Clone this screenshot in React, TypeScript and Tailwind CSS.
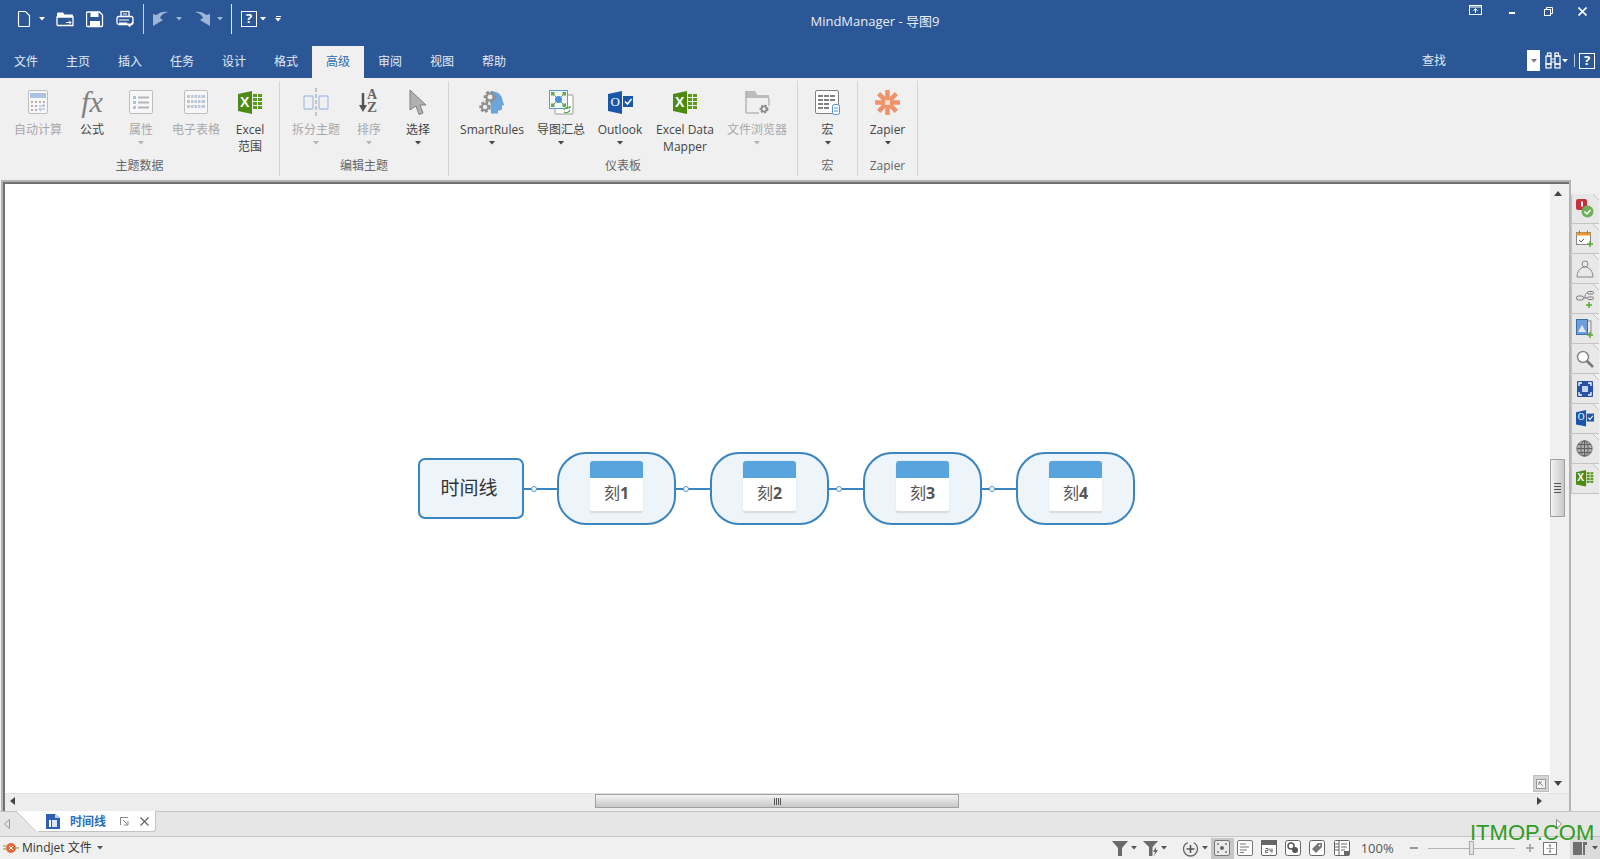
import React from "react";

const Tri = ({ c = "#fff", className = "" }: { c?: string; className?: string }) => (
  <svg width="6" height="4" viewBox="0 0 6 4" className={className}><polygon points="0,0 6,0 3,3.5" fill={c} /></svg>
);

/* ---------- title bar icons ---------- */
const QNew = () => (
  <svg width="14" height="18" viewBox="0 0 14 18"><path d="M2.5 1.5h6l4 4v10a1 1 0 0 1-1 1h-9a1 1 0 0 1-1-1v-13a1 1 0 0 1 1-1z" fill="none" stroke="#fff" strokeWidth="1.2" /></svg>
);
const QOpen = () => (
  <svg width="18" height="18" viewBox="0 0 18 18"><path d="M1 3.5a1 1 0 0 1 1-1h5l1.5 2H16a1 1 0 0 1 1 1V7H1z" fill="#fff" /><path d="M1 7h16v8.500H2a1 1 0 0 1-1-1z" fill="none" stroke="#fff" strokeWidth="1.300" /><path d="M10 12.500h5M13 10.500l2 2-2 2" stroke="#fff" fill="none" /></svg>
);
const QSave = () => (
  <svg width="18" height="18" viewBox="0 0 18 18"><path d="M1.500 2h12l3 3v10.500a1 1 0 0 1-1 1h-14a1 1 0 0 1-1-1V3a1 1 0 0 1 1-1z" fill="none" stroke="#fff" strokeWidth="1.300" /><rect x="4.500" y="2" width="8" height="5" fill="#fff" /><rect x="4" y="11" width="10" height="6" fill="#fff" /></svg>
);
const QPrint = () => (
  <svg width="18" height="18" viewBox="0 0 18 18"><rect x="5" y="1.500" width="8" height="5" fill="none" stroke="#fff" strokeWidth="1.300" /><path d="M7 4h4" stroke="#fff" /><rect x="1" y="6.500" width="16" height="8" rx="2" fill="#2b5797" stroke="#fff" strokeWidth="1.300" /><path d="M3 9.500h10v1H3zM3 12.500h8v2.500H3z" fill="#fff" /><path d="M11.500 13.500l2 2.500 3.500-4" stroke="#fff" strokeWidth="1.500" fill="none" /></svg>
);
const QUndo = () => (
  <svg width="17" height="17" viewBox="0 0 17 17"><path d="M1 4L4.500 5C8 2 12 1 16 2 12 3 9 5 8 8L11 10 1 16z" fill="#9db5d6" /></svg>
);
const QRedo = () => (
  <svg width="17" height="17" viewBox="0 0 17 17"><path d="M16 4L12.500 5C9 2 5 1 1 2 5 3 8 5 9 8L6 10 16 16z" fill="#9db5d6" /></svg>
);
const HelpBox = ({ s = 16 }: { s?: number }) => (
  <span className="flex items-center justify-center border-[1.5px] border-white text-white font-bold text-[13px] leading-none" style={{ width: s, height: s }}>?</span>
);
const Binoc = () => (
  <svg width="16" height="17" viewBox="0 0 16 17"><g fill="none" stroke="#fff" strokeWidth="1.200"><rect x="2.500" y="1" width="3.500" height="3" /><rect x="10" y="1" width="3.500" height="3" /><rect x="1" y="4" width="5" height="8" /><rect x="10" y="4" width="5" height="8" /><rect x="1" y="12" width="5" height="4" /><rect x="10" y="12" width="5" height="4" /><path d="M6 7h4M6 10h4" /></g></svg>
);

/* ---------- ribbon icons ---------- */
const Calc = () => (
  <svg width="22" height="26" viewBox="0 0 22 26"><rect x="1.500" y="1.500" width="19" height="23" rx="1.500" fill="#f7f7f7" stroke="#bdbdbd" /><rect x="3" y="4" width="16" height="5" fill="#a9c3e3" /><g fill="#b0b0b0"><rect x="4" y="12" width="2" height="2" /><rect x="8" y="12" width="2" height="2" /><rect x="12" y="12" width="2" height="2" /><rect x="16" y="12" width="2" height="2" /><rect x="4" y="16" width="2" height="2" /><rect x="8" y="16" width="2" height="2" /><rect x="4" y="20" width="2" height="2" /><rect x="8" y="20" width="2" height="2" /></g><path d="M12 17h6l-2-2M18 20h-6l2 2" stroke="#8fb1d6" fill="none" /></svg>
);
const Props = () => (
  <svg width="24" height="24" viewBox="0 0 24 24"><rect x="0.500" y="0.500" width="23" height="23" rx="1.500" fill="#f7f7f7" stroke="#bdbdbd" /><g fill="#a9c3e3"><rect x="4" y="6" width="3" height="3" /><rect x="4" y="11" width="3" height="3" /><rect x="4" y="16" width="3" height="3" /></g><g fill="#b5b5b5"><rect x="9" y="6.500" width="11" height="2" /><rect x="9" y="11.500" width="11" height="2" /><rect x="9" y="16.500" width="11" height="2" /></g></svg>
);
const Grid = () => (
  <svg width="24" height="24" viewBox="0 0 24 24"><rect x="0.500" y="0.500" width="23" height="23" rx="1.500" fill="#f7f7f7" stroke="#bdbdbd" /><g fill="#bcc8d6"><rect x="3" y="5" width="18" height="3" /><rect x="3" y="10" width="18" height="3" /><rect x="3" y="15" width="18" height="3" /></g><g stroke="#f7f7f7"><path d="M6.500 4v15M10 4v15M13.500 4v15M17 4v15" /></g></svg>
);
const ExcelIc = ({ s = 1 }: { s?: number }) => (
  <span className="relative block" style={{ width: 25 * s, height: 23 * s }}>
    <svg width={25 * s} height={23 * s} viewBox="0 0 25 23" className="absolute inset-0"><polygon points="0,3 14,0 14,23 0,20" fill="#4d8a13" /><g fill="#5c9a1e"><rect x="15" y="3" width="4" height="3" /><rect x="20" y="3" width="4" height="3" /><rect x="15" y="7" width="4" height="3" /><rect x="20" y="7" width="4" height="3" /><rect x="15" y="11" width="4" height="3" /><rect x="20" y="11" width="4" height="3" /><rect x="15" y="15" width="4" height="3" /><rect x="20" y="15" width="4" height="3" /></g></svg>
    <span className="absolute font-bold text-white leading-none" style={{ left: 2.500 * s, top: 4 * s, fontSize: 14 * s, fontFamily: "Liberation Sans" }}>X</span>
  </span>
);
const Split = () => (
  <svg width="26" height="28" viewBox="0 0 26 28"><rect x="1" y="8" width="9" height="13" rx="1" fill="none" stroke="#a9c3e3" strokeWidth="1.300" /><rect x="16" y="8" width="9" height="13" rx="1" fill="none" stroke="#a9c3e3" strokeWidth="1.300" /><path d="M13 0v28" stroke="#c4c4c4" strokeWidth="2" strokeDasharray="4 2" /></svg>
);
const Sort = () => (
  <span className="relative block w-[20px] h-[24px]">
    <svg width="8" height="20" viewBox="0 0 8 20" className="absolute left-0 top-[3px]"><path d="M4 0v13" stroke="#555" strokeWidth="2.500" /><polygon points="0,12 8,12 4,19" fill="#555" /></svg>
    <span className="absolute left-[8px] top-[-2px] text-[14px] leading-[14px] font-bold text-[#666] font-['Liberation_Serif']">A</span>
    <span className="absolute left-[8px] top-[10px] text-[15px] leading-[15px] font-bold text-[#666] font-['Liberation_Serif']">Z</span>
  </span>
);
const Cursor = () => (
  <svg width="18" height="26" viewBox="0 0 18 26"><polygon points="1,1 17,16 11,16 14,24 10,25.500 7,17 1,21" fill="#b0b0b0" stroke="#808080" /></svg>
);
const Gear = ({ x, y, r, c }: { x: number; y: number; r: number; c: string }) => (
  <g>
    <circle cx={x} cy={y} r={r} fill="none" stroke={c} strokeWidth={r * 0.55} strokeDasharray={`${r * 0.55} ${r * 0.4}`} />
    <circle cx={x} cy={y} r={r * 0.72} fill="#f0f0f0" stroke={c} strokeWidth={r * 0.45} />
  </g>
);
const Smart = () => (
  <svg width="26" height="26" viewBox="0 0 26 26"><path d="M11 3c7-2 12 3 12.500 8 0 2 2 4 1.500 5l-2 .5v3c0 2-2 2-4 2v3h-7z" fill="#6aa6dc" /><Gear x={11} y={8} r={5} c="#8f8f8f" /><Gear x={6} y={18} r={4.500} c="#8f8f8f" /></svg>
);
const Rollup = () => (
  <svg width="25" height="25" viewBox="0 0 25 25"><rect x="6" y="5" width="18" height="19" rx="1" fill="#fff" stroke="#9a9a9a" /><rect x="0.500" y="0.500" width="18" height="18" fill="#f3f8fd" stroke="#5b9bd5" /><path d="M4 4l11 11M15 4L4 15" stroke="#6aa84f" /><circle cx="9.500" cy="9.500" r="3.500" fill="#4a90d9" /><g fill="#6aa84f"><rect x="2" y="2" width="3.500" height="3.500" /><rect x="13.500" y="2" width="3.500" height="3.500" /><rect x="2" y="13.500" width="3.500" height="3.500" /><rect x="13.500" y="13.500" width="3.500" height="3.500" /></g><path d="M15 20a4 4 0 0 1 6-2M21 18v-2M21 20a4 4 0 0 1-6 2" stroke="#58a832" strokeWidth="1.200" fill="none" /></svg>
);
const OutlookIc = ({ s = 1 }: { s?: number }) => (
  <span className="relative block" style={{ width: 25 * s, height: 23 * s }}>
    <svg width={25 * s} height={23 * s} viewBox="0 0 25 23" className="absolute inset-0"><polygon points="0,3 14,0 14,23 0,20" fill="#1b57a8" /><rect x="15" y="5" width="10" height="11" fill="#1b57a8" /><path d="M17 10.500l2.500 2.500 4-5" stroke="#fff" strokeWidth="1.600" fill="none" /></svg>
    <span className="absolute text-white leading-none font-['Liberation_Serif']" style={{ left: 3 * s, top: 4.500 * s, fontSize: 13 * s }}>O</span>
  </span>
);
const FolderGear = () => (
  <svg width="25" height="25" viewBox="0 0 25 25"><path d="M1 1h9l2.500 4H24v3H1z" fill="#bcbcbc" /><path d="M1 8v15h13M24 8v8" stroke="#9a9a9a" fill="none" /><path d="M1 1v7" stroke="#9a9a9a" /><Gear x={19} y={19} r={3.500} c="#8a8a8a" /></svg>
);
const Macro = () => (
  <svg width="25" height="25" viewBox="0 0 25 25"><rect x="0.500" y="0.500" width="23" height="23" rx="1.500" fill="#fdfdfd" stroke="#808080" /><g fill="#808080"><rect x="3" y="5" width="5" height="2" /><rect x="9" y="5" width="5" height="2" /><rect x="15" y="5" width="5" height="2" /><rect x="3" y="9" width="5" height="2" /><rect x="9" y="9" width="5" height="2" /><rect x="15" y="9" width="5" height="2" /><rect x="3" y="13" width="5" height="2" /><rect x="9" y="13" width="5" height="2" /><rect x="3" y="17" width="5" height="2" /><rect x="9" y="17" width="5" height="2" /></g><rect x="17.500" y="14.500" width="7" height="10" rx="2" fill="#fff" stroke="#4a90d9" /><path d="M19 18h4M19 21h4" stroke="#4a90d9" /></svg>
);
const ZapierIc = () => (
  <svg width="25" height="25" viewBox="0 0 25 25"><g stroke="#f0926a" strokeWidth="4.500"><path d="M12.500 0v25M0 12.500h25M3.600 3.600l17.800 17.800M21.400 3.600L3.600 21.400" /></g><rect x="10" y="10" width="5" height="5" fill="#f7dccf" /></svg>
);

const RibbonBtn = ({ w, icon, l1, l2, arrow, off }: { w: string; icon: React.ReactNode; l1: string; l2?: string; arrow?: boolean; off?: boolean }) => (
  <div className={`flex flex-col items-center pt-[7px] ${w}`}>
    <div className="h-[28px] flex items-center justify-center">{icon}</div>
    <div className={`mt-[5px] text-[12px] leading-[17px] whitespace-nowrap ${off ? "text-[#a8a8a8]" : "text-[#444444]"}`}>{l1}</div>
    {l2 && <div className={`text-[12px] leading-[17px] whitespace-nowrap ${off ? "text-[#a8a8a8]" : "text-[#444444]"}`}>{l2}</div>}
    {arrow && <Tri c={off ? "#b5b5b5" : "#444444"} className="mt-[3px]" />}
  </div>
);

const Group = ({ w, label, pl, children }: { w: string; label: string; pl: string; children: React.ReactNode }) => (
  <div className={`flex flex-col h-[95px] border-r border-[#d4d4d4] shrink-0 ${w}`}>
    <div className={`flex h-[76px] ${pl}`}>{children}</div>
    <div className="text-center text-[12px] leading-[18px] text-[#666666]">{label}</div>
  </div>
);

/* ---------- side tab icons ---------- */
const SideTab = ({ children }: { children: React.ReactNode }) => (
  <div className="relative w-[28px] h-[30px] bg-[#e8e8e8] border-l border-b border-[#c4c4c4] rounded-tl-[3px] flex items-center justify-center pr-[2px]">
    {children}
    <svg width="6" height="6" viewBox="0 0 6 6" className="absolute right-0 top-0"><polygon points="0,0 6,0 6,6" fill="#f0f0f0" /><path d="M0 0l6 6" stroke="#c4c4c4" /></svg>
  </div>
);

const sideIcons: React.ReactNode[] = [
  <svg key="0" width="18" height="19" viewBox="0 0 18 19"><rect x="0" y="0" width="11" height="11" rx="2" fill="#c62f3c" /><path d="M6 2.500v5" stroke="#fff" strokeWidth="2" /><circle cx="11.500" cy="12.500" r="6" fill="#6fae5b" /><path d="M8.500 12.500l2.500 2.500 3.500-4" stroke="#fff" strokeWidth="1.500" fill="none" /></svg>,
  <svg key="1" width="18" height="18" viewBox="0 0 18 18"><rect x="0.500" y="2.500" width="14" height="12" fill="#fff" stroke="#888" /><rect x="0.500" y="2.500" width="14" height="3" fill="#ee9a2f" /><path d="M3.500 0.500v3M11.500 .5v3" stroke="#777" /><path d="M3 10l2 2 3-3" stroke="#555" fill="none" /><path d="M11 14h6M14 11v6" stroke="#58a832" strokeWidth="1.500" /></svg>,
  <svg key="2" width="18" height="18" viewBox="0 0 18 18"><circle cx="9" cy="4" r="3" fill="#e8e8e8" stroke="#888" /><path d="M1 17c0-5 3-10 8-10s8 5 8 10z" fill="#e8e8e8" stroke="#888" /></svg>,
  <svg key="3" width="18" height="18" viewBox="0 0 18 18"><rect x="0.500" y="6" width="7" height="4" rx="2" fill="none" stroke="#777" /><rect x="11.500" y="1.500" width="6" height="2.500" rx="1.200" fill="none" stroke="#777" /><rect x="11.500" y="7" width="6" height="2.500" rx="1.200" fill="none" stroke="#777" /><path d="M7.500 8h4M9 8c0-4 1-5 2.500-5" stroke="#777" fill="none" /><path d="M10 15h6M13 12v6" stroke="#58a832" strokeWidth="1.500" /></svg>,
  <svg key="4" width="18" height="19" viewBox="0 0 18 19"><rect x="9" y="2" width="6" height="13" fill="none" stroke="#888" /><rect x="0.500" y="0.500" width="11" height="15" fill="#6f9fd8" stroke="#3a6ea8" /><polygon points="2,13 6,6 10,13" fill="#dfe9f5" /><path d="M11 16h6M14 13v6" stroke="#58a832" strokeWidth="1.500" /></svg>,
  <svg key="5" width="18" height="18" viewBox="0 0 18 18"><circle cx="7" cy="7" r="5.500" fill="#fff" stroke="#888" strokeWidth="1.500" /><path d="M11 11l6 6" stroke="#777" strokeWidth="2.500" /></svg>,
  <svg key="6" width="16" height="16" viewBox="0 0 16 16"><rect width="16" height="16" rx="1" fill="#2a4fa8" /><path d="M2 5V2h3M11 2h3v3M14 11v3h-3M5 14H2v-3" stroke="#fff" fill="none" strokeWidth="1.300" /><rect x="5" y="5" width="6" height="6" fill="#c6d4ef" /></svg>,
  <OutlookIc key="7" s={0.72} />,
  <svg key="8" width="17" height="17" viewBox="0 0 17 17"><circle cx="8.500" cy="8.500" r="7.700" fill="#aeaeae" stroke="#6f6f6f" /><path d="M1 8.500h15M2 4.500h13M2 12.500h13M8.500 1v15" stroke="#5f5f5f" /><ellipse cx="8.500" cy="8.500" rx="3.700" ry="7.700" fill="none" stroke="#5f5f5f" /></svg>,
  <ExcelIc key="9" s={0.72} />,
];

export default function App() {
  const tabs = ["文件", "主页", "插入", "任务", "设计", "格式", "高级", "审阅", "视图", "帮助"];
  return (
    <div className="relative w-[1600px] h-[859px] overflow-hidden flex flex-col bg-[#f0f0f0] font-['Open_Sans','Noto_Sans_CJK_SC',sans-serif]">
      {/* title bar */}
      <div className="h-[46px] bg-[#2b5797] flex text-white shrink-0">
        <div className="w-[750px] flex items-center h-[37px] pl-[17px]">
          <QNew />
          <Tri className="ml-[8px]" />
          <div className="ml-[11px]"><QOpen /></div>
          <div className="ml-[12px]"><QSave /></div>
          <div className="ml-[12px]"><QPrint /></div>
          <div className="ml-[9px] w-px h-[30px] bg-[#c9d5e6]" />
          <div className="ml-[8px]"><QUndo /></div>
          <Tri c="#9db5d6" className="ml-[7px]" />
          <div className="ml-[12px]"><QRedo /></div>
          <Tri c="#9db5d6" className="ml-[6px]" />
          <div className="ml-[8px] w-px h-[30px] bg-[#e3e9f2]" />
          <div className="ml-[9px]"><HelpBox /></div>
          <Tri className="ml-[3px]" />
          <div className="ml-[9px] flex flex-col items-center gap-px"><div className="w-[5px] h-px bg-white" /><Tri /></div>
        </div>
        <div className="w-[250px] h-[43px] flex items-center justify-center text-[13px] text-[#e9eef6]">MindManager - 导图9</div>
        <div className="flex-1 flex items-start">
          <svg width="14" height="11" viewBox="0 0 14 11" className="ml-[469px] mt-[5px]"><rect x="0.500" y="0.500" width="12" height="9" fill="none" stroke="#fff" /><path d="M1 2h11" stroke="#fff" /><path d="M6.500 8V4M4.500 6l2-2.500 2 2.500" stroke="#fff" fill="none" /></svg>
          <div className="ml-[26px] mt-[12px] w-[6px] h-[2px] bg-white" />
          <svg width="9" height="9" viewBox="0 0 9 9" className="ml-[29px] mt-[7px]"><rect x="0.500" y="2.500" width="6" height="6" fill="none" stroke="#fff" /><path d="M2.500 2.500v-2h6v6h-2" fill="none" stroke="#fff" /></svg>
          <svg width="9" height="9" viewBox="0 0 9 9" className="ml-[25px] mt-[7px]"><path d="M.5.500l8 8M8.500.500l-8 8" stroke="#fff" strokeWidth="1.600" /></svg>
        </div>
      </div>

      {/* tab bar */}
      <div className="h-[32px] bg-[#2b5797] flex shrink-0">
        {tabs.map((t) => (
          <div key={t} className={`w-[52px] flex items-center justify-center text-[12px] ${t === "高级" ? "bg-[#f0f0f0] text-[#2b6cb0]" : "text-[#e4eaf3]"}`}>{t}</div>
        ))}
        <div className="flex-1 flex items-center pl-[902px] pb-[3px]">
          <span className="text-[12px] text-[#e4eaf3] w-[105px]">查找</span>
          <div className="w-[13px] h-[21px] bg-white flex items-center justify-center"><Tri c="#777" /></div>
          <div className="ml-[5px]"><Binoc /></div>
          <Tri className="ml-[1px]" />
          <div className="ml-[6px] w-px h-[13px] bg-[#b9c8de]" />
          <div className="ml-[4px]"><HelpBox /></div>
        </div>
      </div>

      {/* ribbon */}
      <div className="h-[100px] pt-[3px] flex shrink-0">
        <Group w="w-[280px]" pl="pl-[9px]" label="主题数据">
          <RibbonBtn w="w-[58px]" off icon={<Calc />} l1="自动计算" />
          <RibbonBtn w="w-[50px]" icon={<span className="font-['Liberation_Serif'] italic text-[30px] leading-none text-[#808080]">fx</span>} l1="公式" />
          <RibbonBtn w="w-[48px]" off icon={<Props />} l1="属性" arrow />
          <RibbonBtn w="w-[62px]" off icon={<Grid />} l1="电子表格" />
          <RibbonBtn w="w-[46px]" icon={<ExcelIc />} l1="Excel" l2="范围" />
        </Group>
        <Group w="w-[169px]" pl="pl-[7px]" label="编辑主题">
          <RibbonBtn w="w-[58px]" off icon={<Split />} l1="拆分主题" arrow />
          <RibbonBtn w="w-[48px]" icon={<Sort />} l1="排序" off arrow />
          <RibbonBtn w="w-[50px]" icon={<Cursor />} l1="选择" arrow />
        </Group>
        <Group w="w-[349px]" pl="pl-[7px]" label="仪表板">
          <RibbonBtn w="w-[72px]" icon={<Smart />} l1="SmartRules" arrow />
          <RibbonBtn w="w-[66px]" icon={<Rollup />} l1="导图汇总" arrow />
          <RibbonBtn w="w-[52px]" icon={<OutlookIc />} l1="Outlook" arrow />
          <RibbonBtn w="w-[78px]" icon={<ExcelIc />} l1="Excel Data" l2="Mapper" />
          <RibbonBtn w="w-[66px]" off icon={<FolderGear />} l1="文件浏览器" arrow />
        </Group>
        <Group w="w-[60px]" pl="justify-center" label="宏">
          <RibbonBtn w="w-[58px]" icon={<Macro />} l1="宏" arrow />
        </Group>
        <Group w="w-[60px]" pl="justify-center" label="Zapier">
          <RibbonBtn w="w-[58px]" icon={<ZapierIc />} l1="Zapier" arrow />
        </Group>
      </div>

      {/* middle */}
      <div className="flex-1 min-h-0 flex">
        <div className="flex-1 min-w-0 ml-[1px] mt-[2px] border-t-2 border-l-2 border-r-2 border-[#b4b4b4] flex">
          <div className="flex-1 min-w-0 flex flex-col border-t-2 border-l-2 border-[#707070]">
            <div className="flex-1 min-h-0 flex">
              {/* canvas */}
              <div className="flex-1 relative bg-white">
                <div className="absolute left-[413px] top-[268px] flex items-center">
                  <div className="w-[106px] h-[61px] rounded-[7px] border-2 border-[#3a84bf] bg-[#edf4fa] flex items-center justify-center pr-[4px] text-[19px] text-[#333333]">时间线</div>
                  {["1", "2", "3", "4"].map((n, i) => (
                    <div key={n} className="flex items-center">
                      <div className={`relative h-[2px] bg-[#3a84bf] ${i === 0 ? "w-[33px]" : "w-[34px]"}`}>
                        <div className="absolute left-[7px] top-[-2px] w-[6px] h-[6px] rounded-full border border-[#4f97cb] bg-white" />
                      </div>
                      <div className="w-[119px] h-[73px] rounded-[29px] border-2 border-[#3a84bf] bg-[#edf4fa] flex items-center justify-center">
                        <div className="w-[53px] h-[52px] -mt-[4px] rounded-[3px] bg-white border-b-2 border-[#dcdcdc] flex flex-col overflow-hidden shadow-[0_0_1px_#cccccc]">
                          <div className="h-[17px] bg-[#57a5dc] shrink-0" />
                          <div className="flex-1 flex items-center justify-center text-[16px] text-[#555555] -mt-[2px]">刻<span className="font-bold font-['Open_Sans']">{n}</span></div>
                        </div>
                      </div>
                    </div>
                  ))}
                </div>
                <div className="absolute right-[1px] bottom-[1px] w-[16px] h-[17px] bg-[#d4d4d4] border border-[#c0c0c0] flex items-center justify-center">
                  <svg width="10" height="10" viewBox="0 0 10 10"><rect x="0.500" y="0.500" width="9" height="9" fill="#f2f2f2" stroke="#999" /><path d="M3 3l4 4M3 3h3M3 3v3" stroke="#888" fill="none" /></svg>
                </div>
              </div>
              {/* vertical scrollbar */}
              <div className="w-[19px] bg-[#f0f0f0] flex flex-col items-center">
                <svg width="8" height="5" viewBox="0 0 8 5" className="mt-[7px] -ml-[4px]"><polygon points="0,5 8,5 4,0" fill="#444" /></svg>
                <div className="mt-[263px] -ml-[4px] w-[15px] h-[58px] border border-[#a0a0a0] bg-gradient-to-r from-[#f3f3f3] to-[#c8c8c8] flex flex-col items-center justify-center gap-[2px]">
                  <div className="w-[7px] h-px bg-[#555]" /><div className="w-[7px] h-px bg-[#555]" /><div className="w-[7px] h-px bg-[#555]" /><div className="w-[7px] h-px bg-[#555]" />
                </div>
                <svg width="8" height="5" viewBox="0 0 8 5" className="mt-[264px] -ml-[4px]"><polygon points="0,0 8,0 4,5" fill="#444" /></svg>
              </div>
            </div>
            {/* horizontal scrollbar */}
            <div className="h-[18px] bg-[#ededed] flex items-center border-t border-[#e2e2e2]">
              <svg width="5" height="8" viewBox="0 0 5 8" className="ml-[5px] -mt-[3px]"><polygon points="5,0 5,8 0,4" fill="#444" /></svg>
              <div className="ml-[580px] -mt-[3px] w-[364px] h-[14px] border border-[#a0a0a0] bg-gradient-to-b from-[#f3f3f3] to-[#c8c8c8] flex items-center justify-center gap-[1px]">
                <div className="w-px h-[7px] bg-[#555]" /><div className="w-px h-[7px] bg-[#555]" /><div className="w-px h-[7px] bg-[#555]" /><div className="w-px h-[7px] bg-[#555]" />
              </div>
              <svg width="5" height="8" viewBox="0 0 5 8" className="ml-[578px] -mt-[3px]"><polygon points="0,0 0,8 5,4" fill="#444" /></svg>
            </div>
          </div>
        </div>
        {/* right side tabs */}
        <div className="w-[29px] pt-[16px] shrink-0">
          {sideIcons.map((ic, i) => <SideTab key={i}>{ic}</SideTab>)}
        </div>
      </div>

      {/* document tab strip */}
      <div className="h-[26px] bg-[#e6e6e6] border-t border-b border-[#c4c4c4] flex items-start relative shrink-0">
        <svg width="6" height="10" viewBox="0 0 6 10" className="ml-[4px] mt-[7px]"><polygon points="5.500,.5 5.500,9.500 .5,5" fill="#e6e6e6" stroke="#9a9a9a" /></svg>
        <svg width="24" height="22" viewBox="0 0 24 22" className="ml-[4px] -mt-px"><polygon points="2,0 24,0 24,22 23,22" fill="#fff" /><path d="M2 0l21 21.500" stroke="#c4c4c4" fill="none" /></svg>
        <div className="w-[118px] h-[21px] -mt-px bg-white border-r border-b border-[#c4c4c4] rounded-br-[3px] flex items-center">
          <svg width="14" height="15" viewBox="0 0 14 15" className="ml-[8px]"><path d="M0 0h9l5 4v11H0z" fill="#2f5fb3" /><path d="M9 0l5 4H9z" fill="#bcd0ec" /><rect x="3" y="6" width="2" height="7" fill="#fff" /><rect x="6" y="6" width="5" height="7" fill="#d9e4f4" /></svg>
          <span className="ml-[10px] mt-[2px] text-[12px] font-bold text-[#2b6fc0] w-[36px] whitespace-nowrap">时间线</span>
          <svg width="9" height="9" viewBox="0 0 9 9" className="ml-[14px]"><path d="M.5 8V.5H8M3 3l5 5M8 4v4H4" stroke="#888" fill="none" /></svg>
          <svg width="9" height="9" viewBox="0 0 9 9" className="ml-[11px]"><path d="M.5.500l8 8M8.500.500l-8 8" stroke="#666" strokeWidth="1.300" /></svg>
        </div>
        <svg width="6" height="10" viewBox="0 0 6 10" className="ml-auto mr-[38px] mt-[7px]"><polygon points=".5,.5 .5,9.500 5.500,5" fill="#fff" stroke="#8a8a8a" /></svg>
      </div>

      {/* status bar */}
      <div className="h-[22px] bg-[#f0f0f0] flex items-center shrink-0 text-[12px] text-[#333333]">
        <svg width="16" height="12" viewBox="0 0 16 12" className="ml-[3px]"><path d="M0 4h3M0 7h3M13 6h3" stroke="#58a832" /><circle cx="8" cy="6" r="5" fill="#e8683c" /><path d="M6 4l4 4M10 4l-4 4" stroke="#fff" /></svg>
        <span className="ml-[3px]">Mindjet 文件</span>
        <Tri c="#555" className="ml-[5px]" />
        <svg width="16" height="16" viewBox="0 0 16 16" className="ml-[1009px]"><path d="M0 1h16l-6 7v8H6V8z" fill="#6a6a6a" /></svg>
        <Tri c="#555" className="ml-[3px]" />
        <svg width="16" height="16" viewBox="0 0 16 16" className="ml-[6px]"><path d="M0 1h15l-5.500 6v9H6V7z" fill="#6a6a6a" /><path d="M13 7l-3 5h2l-1 4 4-6h-2z" fill="#6a6a6a" /></svg>
        <Tri c="#555" className="ml-[2px]" />
        <svg width="17" height="17" viewBox="0 0 17 17" className="ml-[15px]"><circle cx="8.500" cy="9" r="7" fill="none" stroke="#666" strokeWidth="1.300" strokeDasharray="30 6" /><path d="M8.500 5v8M4.500 9h8" stroke="#555" strokeWidth="1.600" /></svg>
        <Tri c="#555" className="ml-[3px]" />
        <div className="ml-[3px] w-[23px] h-[21px] bg-[#c6c6c6] flex items-center justify-center">
          <svg width="16" height="16" viewBox="0 0 16 16"><rect x="0.500" y="0.500" width="15" height="15" rx="1.500" fill="#e9e9e9" stroke="#777" /><circle cx="8" cy="8" r="2" fill="#666" /><g fill="#777"><circle cx="4" cy="4" r="1" /><circle cx="12" cy="4" r="1" /><circle cx="4" cy="12" r="1" /><circle cx="12" cy="12" r="1" /></g></svg>
        </div>
        <svg width="16" height="16" viewBox="0 0 16 16" className="ml-[3px]"><rect x="0.500" y="0.500" width="15" height="15" rx="1.500" fill="#fff" stroke="#777" /><path d="M3 4h6M3 7h9M3 10h7M3 12.500h4" stroke="#777" /></svg>
        <svg width="16" height="16" viewBox="0 0 16 16" className="ml-[8px]"><rect x="0.500" y="0.500" width="15" height="15" rx="1.500" fill="#fff" stroke="#666" /><rect x="0" y="0" width="16" height="5" fill="#666" /><path d="M4.500 8.500h2.500v2H4.500v2H7M9 8.500v2.500h2.500M11 8.500v4" stroke="#666" fill="none" /></svg>
        <svg width="16" height="16" viewBox="0 0 16 16" className="ml-[8px]"><rect x="0.500" y="0.500" width="15" height="15" rx="2" fill="#fff" stroke="#666" /><circle cx="6" cy="6" r="3" fill="#fff" stroke="#555" strokeWidth="1.500" /><circle cx="10" cy="10" r="3" fill="#555" /></svg>
        <svg width="16" height="16" viewBox="0 0 16 16" className="ml-[8px]"><rect x="0.500" y="0.500" width="15" height="15" rx="2" fill="#fff" stroke="#666" /><path d="M3 9l6-6h4v4l-6 6z" fill="#777" /><circle cx="10.500" cy="5.500" r="1" fill="#fff" /></svg>
        <svg width="16" height="16" viewBox="0 0 16 16" className="ml-[9px]"><rect x="0.500" y="0.500" width="15" height="15" rx="1" fill="#fff" stroke="#666" /><path d="M5 .5v15M7 4h6M7 7h6M7 10h4M1 4h4M1 7h4M1 10h4" stroke="#666" /><rect x="10" y="11" width="5" height="4" fill="#666" /></svg>
        <span className="ml-[11px] text-[13px] leading-none text-[#555555] w-[32px]">100%</span>
        <div className="ml-[17px] w-[8px] h-[1.500px] bg-[#9a9a9a]" />
        <div className="ml-[10px] relative w-[87px] h-px bg-[#b5b5b5]">
          <div className="absolute left-[41px] top-[-7px] w-[5px] h-[14px] bg-[#e4e4e4] border border-[#a9a9a9]" />
        </div>
        <svg width="8" height="8" viewBox="0 0 8 8" className="ml-[11px]"><path d="M4 0v8M0 4h8" stroke="#9a9a9a" strokeWidth="1.500" /></svg>
        <svg width="14" height="13" viewBox="0 0 14 13" className="ml-[9px]"><rect x="0.500" y="0.500" width="13" height="12" fill="#fff" stroke="#777" /><path d="M7 2.500v8M3 6.500h8M7 2.500l-1 1.500h2zM7 10.500l-1-1.500h2z" stroke="#777" fill="#777" strokeWidth=".6" /></svg>
        <div className="ml-[13px] w-[30px] h-[22px] bg-[#dcdcdc] flex items-center pl-[3px]">
          <div className="w-[9px] h-[13px] bg-[#6f6f6f]" />
          <div className="ml-px w-[4px] h-[13px] flex flex-col"><div className="h-[3px] bg-[#6f6f6f]" /><div className="w-[2px] h-[10px] bg-[#6f6f6f]" /></div>
          <Tri c="#555" className="ml-[5px]" />
        </div>
      </div>

      {/* watermark */}
      <div className="absolute left-[1470px] top-[820px] text-[22px] leading-[26px] text-[#2f9c22] font-['Liberation_Sans'] pointer-events-none">ITMOP.COM</div>
    </div>
  );
}
